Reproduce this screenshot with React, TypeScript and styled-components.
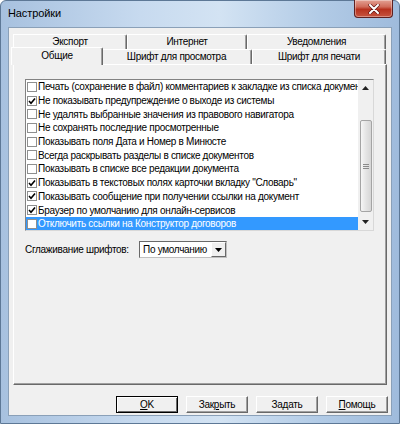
import React from 'react';
import styled, { createGlobalStyle } from 'styled-components';

const GlobalStyle = createGlobalStyle`
  html, body { margin: 0; padding: 0; background: #ffffff; }
  body {
    font-family: 'Liberation Sans', Arial, sans-serif;
    font-size: 10px;
    letter-spacing: -0.3px;
    color: #000;
  }
`;

const options = [
  { label: 'Печать (сохранение в файл) комментариев к закладке из списка документов', checked: false },
  { label: 'Не показывать предупреждение о выходе из системы', checked: true },
  { label: 'Не удалять выбранные значения из правового навигатора', checked: false },
  { label: 'Не сохранять последние просмотренные', checked: false },
  { label: 'Показывать поля Дата и Номер в Минюсте', checked: false },
  { label: 'Всегда раскрывать разделы в списке документов', checked: false },
  { label: 'Показывать в списке все редакции документа', checked: false },
  { label: 'Показывать в текстовых полях карточки вкладку "Словарь"', checked: true },
  { label: 'Показывать сообщение при получении ссылки на документ', checked: true },
  { label: 'Браузер по умолчанию для онлайн-сервисов', checked: true },
  { label: 'Отключить ссылки на Конструктор договоров', checked: false, selected: true },
];

const topTabs = [
  { label: 'Экспорт', width: 114 },
  { label: 'Интернет', width: 120 },
  { label: 'Уведомления', width: 139 },
];

const bottomTabs = [
  { label: 'Общие', width: 88, active: true },
  { label: 'Шрифт для просмотра', width: 151 },
  { label: 'Шрифт для печати', width: 134 },
];

const App = () => {
  return (
    <>
      <GlobalStyle />
      <Window>
        <TitleBar>
          <Title>Настройки</Title>
          <CloseButton>
            <svg width="12" height="10" viewBox="0 0 12 10">
              <path d="M2 1 L10 9 M10 1 L2 9" stroke="#5a1010" strokeWidth="3.2" strokeLinecap="round" />
              <path d="M2 1 L10 9 M10 1 L2 9" stroke="#ffffff" strokeWidth="2" strokeLinecap="round" />
            </svg>
          </CloseButton>
        </TitleBar>
        <Client>
          <TabRow>
            {topTabs.map((t) => (
              <Tab key={t.label} $width={t.width}>{t.label}</Tab>
            ))}
          </TabRow>
          <TabRow>
            {bottomTabs.map((t) => (
              <Tab key={t.label} $width={t.width} $active={t.active}>{t.label}</Tab>
            ))}
          </TabRow>
          <Panel>
            <ListBox>
              <Items>
                {options.map((o) => (
                  <Item key={o.label} $selected={o.selected}>
                    <CheckBox>
                      {o.checked && (
                        <svg width="8" height="8" viewBox="0 0 8 8">
                          <path d="M1 4 L3 6.2 L7 1.5" stroke="#000" strokeWidth="1.6" fill="none" />
                        </svg>
                      )}
                    </CheckBox>
                    <ItemText>{o.label}</ItemText>
                  </Item>
                ))}
              </Items>
              <ScrollBar>
                <ArrowButton>
                  <svg width="7" height="4" viewBox="0 0 7 4"><path d="M0 4 L3.5 0 L7 4 Z" fill="#222" /></svg>
                </ArrowButton>
                <Track>
                  <Thumb>
                    <Grip />
                  </Thumb>
                </Track>
                <ArrowButton>
                  <svg width="7" height="4" viewBox="0 0 7 4"><path d="M0 0 L3.5 4 L7 0 Z" fill="#222" /></svg>
                </ArrowButton>
              </ScrollBar>
            </ListBox>
            <FontRow>
              <FieldLabel>Сглаживание шрифтов:</FieldLabel>
              <Select>
                <SelectValue>По умолчанию</SelectValue>
                <DropButton>
                  <svg width="7" height="4" viewBox="0 0 7 4"><path d="M0 0 L3.5 4 L7 0 Z" fill="#000" /></svg>
                </DropButton>
              </Select>
            </FontRow>
          </Panel>
          <ButtonRow>
            <Button $default><u>O</u>K</Button>
            <Button>Зак<u>р</u>ыть</Button>
            <Button>За<u>д</u>ать</Button>
            <Button><u>П</u>омощь</Button>
          </ButtonRow>
        </Client>
      </Window>
    </>
  );
};

export default App;

const Window = styled.div`
  width: 400px;
  height: 424px;
  box-sizing: border-box;
  display: flex;
  flex-direction: column;
  padding: 0 7px 7px;
  border: 1px solid #5d7896;
  border-radius: 6px 6px 0 0;
  background: linear-gradient(to right, #a7c1df 0%, #c7daef 35%, #d3e3f3 55%, #b2cbe6 80%, #9fbbdc 100%);
`;

const TitleBar = styled.div`
  height: 26px;
  display: flex;
  align-items: flex-start;
`;

const Title = styled.div`
  font-size: 11px;
  letter-spacing: -0.1px;
  margin-top: 6px;
  color: #000;
`;

const CloseButton = styled.div`
  margin-left: auto;
  margin-top: -1px;
  margin-right: -1px;
  width: 39px;
  height: 18px;
  display: flex;
  align-items: center;
  justify-content: center;
  box-sizing: border-box;
  border: 1px solid #5e2020;
  border-top: none;
  border-radius: 0 0 4px 4px;
  background: linear-gradient(to bottom, #e3a194 0%, #d06b5a 40%, #b7311e 55%, #c6543f 100%);
  box-shadow: inset 0 0 0 1px rgba(255, 255, 255, 0.35);
`;

const Client = styled.div`
  flex: 1;
  display: flex;
  flex-direction: column;
  background: #f0f0f0;
  border: 1px solid #8aa0b8;
  padding: 6px 3px 2px 4px;
`;

const TabRow = styled.div`
  display: flex;
  height: 15px;
  position: relative;
`;

const Tab = styled.div<{ $width: number; $active?: boolean }>`
  width: ${({ $width }) => $width}px;
  box-sizing: border-box;
  display: flex;
  align-items: center;
  justify-content: center;
  border-top: 1px solid #ffffff;
  border-left: 1px solid #ffffff;
  border-right: 1px solid #696969;
  border-top-right-radius: 2px;
  box-shadow: inset -1px 0 #a0a0a0;
  background: #f0f0f0;
  padding-bottom: 1px;
  ${({ $active }) =>
    $active
      ? `
    position: relative;
    z-index: 2;
    height: 18px;
    width: 92px;
    margin: -2px -2px -1px -2px;
    padding-bottom: 3px;
  `
      : ''}
`;

const Panel = styled.div`
  flex: 1;
  display: flex;
  flex-direction: column;
  box-sizing: border-box;
  margin-right: 1px;
  border-top: 1px solid #ffffff;
  border-left: 1px solid #ffffff;
  border-right: 1px solid #696969;
  border-bottom: 1px solid #696969;
  box-shadow: inset -1px -1px #a0a0a0;
  padding: 14px 12px 0 11px;
`;

const ListBox = styled.div`
  height: 152px;
  box-sizing: border-box;
  display: flex;
  background: #ffffff;
  border-top: 1px solid #828282;
  border-left: 1px solid #828282;
  border-right: 1px solid #d8d8d8;
  border-bottom: 1px solid #d8d8d8;
`;

const Items = styled.div`
  flex: 1;
  min-width: 0;
  overflow: hidden;
`;

const Item = styled.div<{ $selected?: boolean }>`
  height: 13.7px;
  display: flex;
  align-items: center;
  white-space: nowrap;
  background: ${({ $selected }) => ($selected ? '#3399ff' : 'transparent')};
  color: ${({ $selected }) => ($selected ? '#ffffff' : '#000000')};
`;

const CheckBox = styled.div`
  flex: none;
  width: 10px;
  height: 10px;
  box-sizing: border-box;
  margin-left: 1px;
  margin-right: 1px;
  border: 1px solid #8e8f8f;
  background: #ffffff;
  display: flex;
  align-items: center;
  justify-content: center;
`;

const ItemText = styled.span`
  font-size: 10px;
`;

const ScrollBar = styled.div`
  flex: none;
  width: 15px;
  display: flex;
  flex-direction: column;
  background: #f0f0f0;
`;

const ArrowButton = styled.div`
  height: 16px;
  display: flex;
  align-items: center;
  justify-content: center;
`;

const Track = styled.div`
  flex: 1;
  padding: 24px 1px 0 2px;
`;

const Thumb = styled.div`
  height: 92px;
  box-sizing: border-box;
  border: 1px solid #a4a4a4;
  border-radius: 2px;
  background: linear-gradient(to right, #f6f6f6, #e4e4e4 50%, #d6d6d6);
  display: flex;
  align-items: center;
  justify-content: center;
`;

const Grip = styled.div`
  width: 6px;
  height: 5px;
  border-top: 1px solid #8a8a8a;
  border-bottom: 1px solid #8a8a8a;
  box-sizing: border-box;
  position: relative;
  &::after {
    content: '';
    position: absolute;
    left: 0;
    right: 0;
    top: 1px;
    border-top: 1px solid #8a8a8a;
  }
`;

const FontRow = styled.div`
  display: flex;
  align-items: center;
  margin-top: 10px;
`;

const FieldLabel = styled.div`
  width: 114px;
`;

const Select = styled.div`
  width: 88px;
  height: 17px;
  box-sizing: border-box;
  display: flex;
  align-items: stretch;
  background: #ffffff;
  border-top: 1px solid #696969;
  border-left: 1px solid #696969;
  border-right: 1px solid #c0c0c0;
  border-bottom: 1px solid #c0c0c0;
`;

const SelectValue = styled.div`
  flex: 1;
  display: flex;
  align-items: center;
  padding-left: 3px;
`;

const DropButton = styled.div`
  width: 15px;
  box-sizing: border-box;
  background: #f0f0f0;
  border-top: 1px solid #ffffff;
  border-left: 1px solid #ffffff;
  border-right: 1px solid #696969;
  border-bottom: 1px solid #696969;
  display: flex;
  align-items: center;
  justify-content: center;
`;

const ButtonRow = styled.div`
  display: flex;
  justify-content: flex-end;
  gap: 8px;
  margin-top: 11px;
`;

const Button = styled.div<{ $default?: boolean }>`
  width: 62px;
  height: 17px;
  box-sizing: border-box;
  display: flex;
  align-items: center;
  justify-content: center;
  background: #f0f0f0;
  border-top: 1px solid ${({ $default }) => ($default ? '#000' : '#ffffff')};
  border-left: 1px solid ${({ $default }) => ($default ? '#000' : '#ffffff')};
  border-right: 1px solid ${({ $default }) => ($default ? '#000' : '#696969')};
  border-bottom: 1px solid ${({ $default }) => ($default ? '#000' : '#696969')};
  box-shadow: ${({ $default }) =>
    $default ? 'inset 1px 1px #ffffff, inset -1px -1px #696969' : 'inset -1px -1px #a0a0a0'};
  u { text-decoration: underline; }
`;
